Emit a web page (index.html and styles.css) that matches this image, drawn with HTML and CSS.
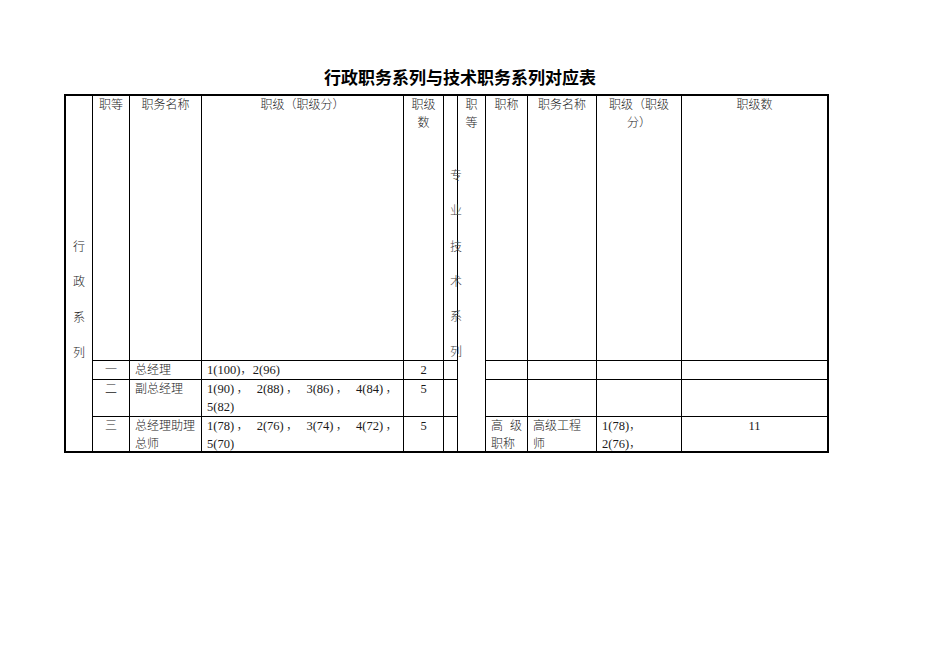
FILE: index.html
```html
<!DOCTYPE html>
<html lang="zh-CN">
<head>
<meta charset="utf-8">
<title>行政职务系列与技术职务系列对应表</title>
<link rel="stylesheet" href="styles.css">
</head>
<body>
<div class="page">
  <h1 class="title">行政职务系列与技术职务系列对应表</h1>
  <div class="sheet">
    <div class="cell series-admin"><span class="vtext vtext-admin">行<br>政<br>系<br>列</span></div>
    <div class="cell grade-tech">职<br>等</div>

    <div class="cell center">职等</div>
    <div class="cell center">职务名称</div>
    <div class="cell center">职级（职级分）</div>
    <div class="cell center">职级<br>数</div>
    <div class="cell narrow"><span class="vtext vtext-tech">专<br>业<br>技<br>术<br>系<br>列</span></div>
    <div class="cell center">职称</div>
    <div class="cell center">职务名称</div>
    <div class="cell center">职级（职级分）</div>
    <div class="cell center last-col">职级数</div>

    <div class="cell center">一</div>
    <div class="cell">总经理</div>
    <div class="cell num">1(100)，2(96)</div>
    <div class="cell center num">2</div>
    <div class="cell narrow"></div>
    <div class="cell"></div>
    <div class="cell"></div>
    <div class="cell"></div>
    <div class="cell last-col"></div>

    <div class="cell center">二</div>
    <div class="cell">副总经理</div>
    <div class="cell num justify">1(90)， 2(88)， 3(86)， 4(84)， 5(82)</div>
    <div class="cell center num">5</div>
    <div class="cell narrow"></div>
    <div class="cell"></div>
    <div class="cell"></div>
    <div class="cell"></div>
    <div class="cell last-col"></div>

    <div class="cell center last-row">三</div>
    <div class="cell last-row">总经理助理总师</div>
    <div class="cell num justify last-row">1(78)， 2(76)， 3(74)， 4(72)， 5(70)</div>
    <div class="cell center num last-row">5</div>
    <div class="cell narrow last-row"></div>
    <div class="cell justify last-row">高级职称</div>
    <div class="cell last-row">高级工程师</div>
    <div class="cell num last-row">1(78)，2(76)，</div>
    <div class="cell center num last-row last-col">11</div>
  </div>
</div>
</body>
</html>
```

FILE: styles.css
```css
html, body {
  margin: 0;
  padding: 0;
  background: #ffffff;
}

body {
  font-family: "Liberation Serif", "Noto Sans CJK SC", serif;
  color: #1a1a1a;
}

.page {
  padding: 67px 0 0 64px;
}

.title {
  margin: 0 0 7px 0;
  width: 765px;
  padding-left: 27px;
  box-sizing: border-box;
  text-align: center;
  font-family: "Noto Sans CJK SC", sans-serif;
  font-size: 17px;
  line-height: 20px;
  font-weight: 700;
  color: #000;
}

.sheet {
  display: grid;
  grid-template-columns: 27px 37px 72px 202px 40px 14px 28px 42px 69px 85px 147px;
  grid-template-rows: 265px 19px 37px 36px;
  width: 765px;
  box-sizing: border-box;
  border-top: 2px solid #000;
  border-left: 2px solid #000;
}

.cell {
  box-sizing: border-box;
  border-right: 1px solid #000;
  border-bottom: 1px solid #000;
  padding: 0 5px;
  font-size: 12px;
  line-height: 18px;
  font-weight: 300;
  overflow: visible;
  min-width: 0;
}

.center {
  text-align: center;
}

.justify {
  text-align: justify;
}

.num {
  font-size: 12.5px;
}

.narrow {
  padding: 0;
}

.last-col {
  border-right: 2px solid #000;
}

.last-row {
  border-bottom: 2px solid #000;
}

.series-admin {
  grid-column: 1;
  grid-row: 1 / span 4;
  border-bottom: 2px solid #000;
  padding: 0;
  text-align: center;
}

.grade-tech {
  grid-column: 7;
  grid-row: 1 / span 4;
  border-bottom: 2px solid #000;
  padding: 0;
  text-align: center;
}

.vtext {
  display: block;
  line-height: 35.3px;
  font-size: 12px;
  width: 12px;
}

.vtext-admin {
  margin: 134px auto 0;
}

.vtext-tech {
  position: relative;
  z-index: 1;
  margin: 63px 0 0 6px;
  color: #444;
}
```
